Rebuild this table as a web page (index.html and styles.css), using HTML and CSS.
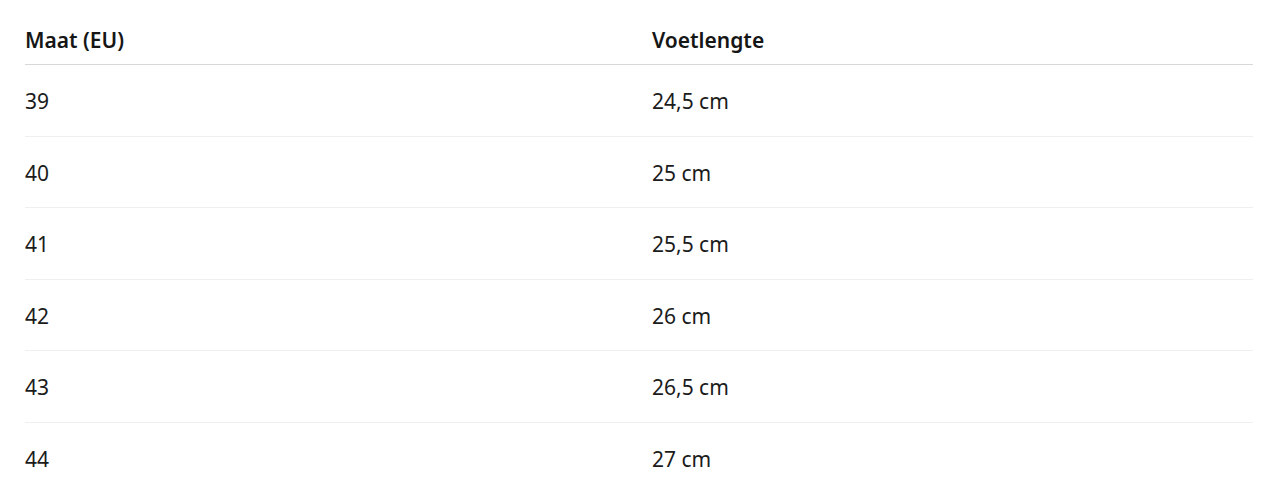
FILE: index.html
```html
<!DOCTYPE html>
<html lang="nl">
<head>
<meta charset="utf-8">
<title>Maattabel</title>
<link rel="stylesheet" href="styles.css">
</head>
<body>
<div class="wrap">
  <table class="size-table">
    <thead>
      <tr><th>Maat (EU)</th><th>Voetlengte</th></tr>
    </thead>
    <tbody>
      <tr><td>39</td><td>24,5 cm</td></tr>
      <tr><td>40</td><td>25 cm</td></tr>
      <tr><td>41</td><td>25,5 cm</td></tr>
      <tr><td>42</td><td>26 cm</td></tr>
      <tr><td>43</td><td>26,5 cm</td></tr>
      <tr><td>44</td><td>27 cm</td></tr>
    </tbody>
  </table>
</div>
</body>
</html>
```
FILE: styles.css
```css
html, body {
  margin: 0;
  padding: 0;
  background: #ffffff;
}
body {
  font-family: "Noto Sans", "Open Sans", "Liberation Sans", sans-serif;
  color: #1b1b1b;
}
.wrap {
  padding: 0 13px 0 25px;
}
.size-table {
  width: 100%;
  border-collapse: collapse;
  table-layout: fixed;
}
.size-table th:first-child,
.size-table td:first-child {
  width: 627px;
}
.size-table th,
.size-table td {
  text-align: left;
  padding: 0;
  font-size: 21px;
}
.size-table th {
  font-weight: 600;
  line-height: 26px;
  padding-top: 27px;
  padding-bottom: 11px;
  border-bottom: 1px solid #d8d8d8;
  color: #161616;
}
.size-table td {
  line-height: 26.6px;
  padding-top: 23px;
  padding-bottom: 21px;
  border-bottom: 1px solid #efefef;
  font-weight: 400;
}
.size-table tbody tr:last-child td {
  border-bottom: none;
}
```
